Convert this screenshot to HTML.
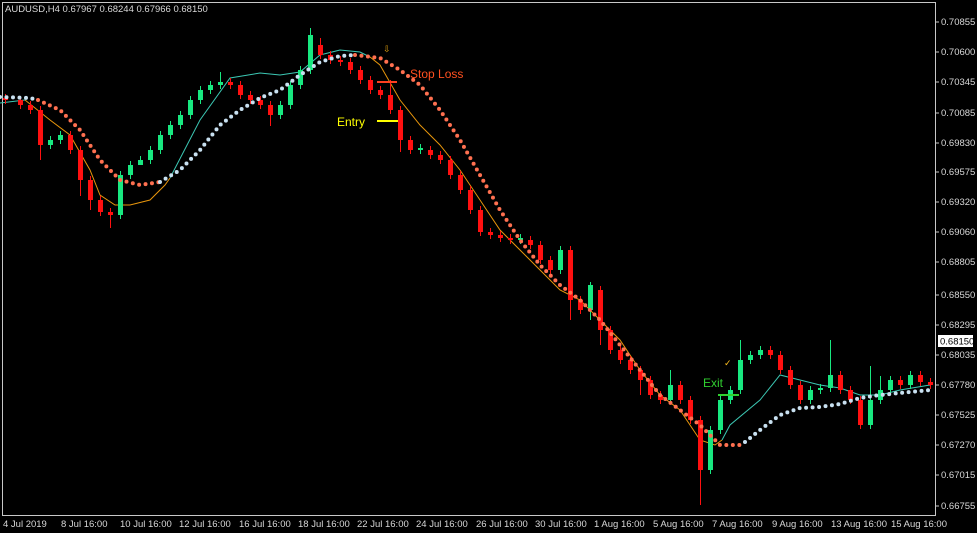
<!DOCTYPE html>
<html><head><meta charset="utf-8"><style>
html,body{margin:0;padding:0;background:#000;width:977px;height:533px;overflow:hidden}
svg{display:block}
text{font-family:"Liberation Sans",sans-serif}
</style></head><body>
<svg width="977" height="533" viewBox="0 0 977 533" xmlns="http://www.w3.org/2000/svg">
<rect x="0" y="0" width="977" height="533" fill="#000"/>
<rect x="2.5" y="2.5" width="933" height="513" fill="none" stroke="#c8c8c8" stroke-width="1"/>
<text x="5" y="12" font-size="9.5" fill="#d8d8d8">AUDUSD,H4  0.67967 0.68244 0.67966 0.68150</text>

<!-- thin MA line -->
<polyline fill="none" stroke="#3cc8b4" stroke-width="1" points="0,103 25,100"/>
<polyline fill="none" stroke="#e8960c" stroke-width="1" points="25,100 50,120 70,135 90,170 100,195 115,205 130,205 150,200 165,185 170,178"/>
<polyline fill="none" stroke="#3cc8b4" stroke-width="1" points="170,178 200,120 230,78 260,73 280,75 300,72 320,55 340,50 360,52 370,57"/>
<polyline fill="none" stroke="#e8960c" stroke-width="1" points="370,57 380,65 400,100 420,125 440,145 460,170 480,200 500,230 520,250 540,270 560,290 580,300 600,320 620,340 640,370 660,395 680,410 700,440 715,445 722,440"/>
<polyline fill="none" stroke="#3cc8b4" stroke-width="1" points="722,440 730,425 760,400 780,375 800,380 820,385 840,388 860,395 880,395 900,390 930,385"/>

<!-- wicks -->
<g stroke-width="1">
<path stroke="#ff1010" d="M5.5 94V104M20.5 96V109M30.5 101V114M40.5 106V160M70.5 131V154M80.5 146V196M90.5 176V210M100.5 196V216M110.5 208V228M230.5 78V89M240.5 81V99M250.5 91V104M260.5 96V109M270.5 101V126M320.5 38V59M330.5 51V64M340.5 56V66M350.5 58V74M360.5 66V84M370.5 76V94M380.5 86V99M390.5 80V114M400.5 106V152M410.5 136V154M430.5 146V159M440.5 151V164M450.5 156V179M460.5 171V194M470.5 186V214M480.5 206V236M490.5 228V239M500.5 231V242M510.5 234V244M530.5 236V249M540.5 241V264M550.5 256V274M570.5 246V320M580.5 296V314M600.5 286V345M610.5 326V354M620.5 346V364M630.5 356V374M640.5 366V395M650.5 376V399M660.5 391V404M680.5 381V404M690.5 396V424M700.5 416V505M770.5 346V359M780.5 351V374M790.5 366V389M800.5 381V404M840.5 371V394M850.5 386V404M860.5 396V429M900.5 376V389M920.5 371V386M930.5 378V389"/>
<path stroke="#18e880" d="M50.5 136V149M60.5 131V144M120.5 171V219M130.5 161V179M140.5 156V164M150.5 146V164M160.5 131V154M170.5 121V139M180.5 111V129M190.5 96V119M200.5 86V104M210.5 81V94M220.5 72V89M280.5 101V119M290.5 81V109M300.5 66V89M310.5 28V74M420.5 144V154M520.5 234V244M560.5 246V274M590.5 282V320M670.5 370V404M710.5 426V474M720.5 396V434M730.5 386V404M740.5 340V394M750.5 351V364M760.5 346V359M810.5 386V404M820.5 384V394M830.5 340V392M870.5 366V429M880.5 376V404M890.5 376V394M910.5 371V389"/>
</g>
<!-- bodies -->
<path fill="#ff1010" d="M3 98h5v2h-5zM18 100h5v5h-5zM28 105h5v5h-5zM38 110h5v35h-5zM68 135h5v15h-5zM78 150h5v30h-5zM88 180h5v20h-5zM98 200h5v12h-5zM108 212h5v3h-5zM228 82h5v3h-5zM238 85h5v10h-5zM248 95h5v5h-5zM258 100h5v5h-5zM268 105h5v10h-5zM318 45h5v10h-5zM328 55h5v5h-5zM338 60h5v2h-5zM348 62h5v8h-5zM358 70h5v10h-5zM368 80h5v10h-5zM378 90h5v5h-5zM388 95h5v15h-5zM398 110h5v30h-5zM408 140h5v10h-5zM428 150h5v5h-5zM438 155h5v5h-5zM448 160h5v15h-5zM458 175h5v15h-5zM468 190h5v20h-5zM478 210h5v22h-5zM488 232h5v3h-5zM498 235h5v3h-5zM508 238h5v2h-5zM528 240h5v5h-5zM538 245h5v15h-5zM548 260h5v10h-5zM568 250h5v50h-5zM578 300h5v10h-5zM598 290h5v40h-5zM608 330h5v20h-5zM618 350h5v10h-5zM628 360h5v10h-5zM638 370h5v10h-5zM648 380h5v15h-5zM658 395h5v5h-5zM678 385h5v15h-5zM688 400h5v20h-5zM698 420h5v50h-5zM768 350h5v5h-5zM778 355h5v15h-5zM788 370h5v15h-5zM798 385h5v15h-5zM838 375h5v15h-5zM848 390h5v10h-5zM858 400h5v25h-5zM898 380h5v5h-5zM918 375h5v7h-5zM928 382h5v3h-5z"/>
<path fill="#18e880" d="M48 140h5v5h-5zM58 135h5v5h-5zM118 175h5v40h-5zM128 165h5v10h-5zM138 160h5v5h-5zM148 150h5v10h-5zM158 135h5v15h-5zM168 125h5v10h-5zM178 115h5v10h-5zM188 100h5v15h-5zM198 90h5v10h-5zM208 85h5v5h-5zM218 82h5v3h-5zM278 105h5v10h-5zM288 85h5v20h-5zM298 70h5v15h-5zM308 35h5v35h-5zM418 148h5v2h-5zM518 238h5v2h-5zM558 250h5v20h-5zM588 285h5v25h-5zM668 385h5v15h-5zM708 430h5v40h-5zM718 400h5v30h-5zM728 390h5v10h-5zM738 360h5v30h-5zM748 355h5v5h-5zM758 350h5v5h-5zM808 390h5v10h-5zM818 388h5v2h-5zM828 375h5v13h-5zM868 400h5v25h-5zM878 390h5v10h-5zM888 380h5v10h-5zM908 375h5v10h-5z"/>

<!-- dotted trend line -->
<g fill="none" stroke-width="4" stroke-linecap="round" stroke-dasharray="0 6.5">
<polyline stroke="#c8e0f0" points="0,97 30,98 38,100"/>
<polyline stroke="#ff7050" points="38,100 60,110 80,130 100,160 120,180 140,185 160,182"/>
<polyline stroke="#c8e0f0" points="160,182 180,170 200,150 220,125 240,110 260,98 280,90 300,75 320,62 340,56 355,55"/>
<polyline stroke="#ff7050" points="355,55 380,58 400,70 420,85 440,110 460,140 480,175 500,210 520,240 540,265 560,285 580,300 600,320 620,345 640,370 660,395 680,410 700,425 720,445 740,445"/>
<polyline stroke="#c8e0f0" points="745,442 760,430 780,415 800,408 820,407 840,404 860,398 880,395 900,393 930,390"/>
</g>

<!-- annotations -->
<line x1="377" y1="82" x2="397" y2="82" stroke="#ff4020" stroke-width="2"/>
<text x="410" y="78" font-size="12" fill="#ff5020">Stop Loss</text>
<line x1="377" y1="121" x2="398" y2="121" stroke="#ffff00" stroke-width="2"/>
<text x="337" y="126" font-size="12" fill="#ffff00">Entry</text>
<line x1="718" y1="395" x2="739" y2="395" stroke="#30d030" stroke-width="2"/>
<text x="703" y="387" font-size="12" fill="#30d030">Exit</text>
<text x="383" y="52" font-size="9" fill="#e0a010">⇩</text>
<text x="724" y="366" font-size="9" fill="#ffc020">✓</text>

<!-- price axis -->
<g font-size="9.5" fill="#d8d8d8">
<text x="941" y="25">0.70855</text>
<text x="941" y="55">0.70600</text>
<text x="941" y="85">0.70345</text>
<text x="941" y="116">0.70085</text>
<text x="941" y="146">0.69830</text>
<text x="941" y="175">0.69575</text>
<text x="941" y="205">0.69320</text>
<text x="941" y="235">0.69060</text>
<text x="941" y="265">0.68805</text>
<text x="941" y="298">0.68550</text>
<text x="941" y="328">0.68295</text>
<text x="941" y="358">0.68035</text>
<text x="941" y="388">0.67780</text>
<text x="941" y="418">0.67525</text>
<text x="941" y="448">0.67270</text>
<text x="941" y="478">0.67015</text>
<text x="941" y="509">0.66755</text>
</g>
<g stroke="#c8c8c8"><path d="M936 22h3M936 52h3M936 82h3M936 113h3M936 143h3M936 172h3M936 202h3M936 232h3M936 262h3M936 295h3M936 325h3M936 355h3M936 385h3M936 415h3M936 445h3M936 475h3M936 506h3"/></g>
<rect x="938" y="335" width="35" height="12" fill="#fff"/>
<text x="940" y="344.5" font-size="9.5" fill="#000">0.68150</text>

<!-- time axis -->
<g font-size="9.5" fill="#d8d8d8">
<text x="3" y="527">4 Jul 2019</text>
<text x="61" y="527">8 Jul 16:00</text>
<text x="120" y="527">10 Jul 16:00</text>
<text x="179" y="527">12 Jul 16:00</text>
<text x="239" y="527">16 Jul 16:00</text>
<text x="298" y="527">18 Jul 16:00</text>
<text x="357" y="527">22 Jul 16:00</text>
<text x="416" y="527">24 Jul 16:00</text>
<text x="476" y="527">26 Jul 16:00</text>
<text x="535" y="527">30 Jul 16:00</text>
<text x="594" y="527">1 Aug 16:00</text>
<text x="653" y="527">5 Aug 16:00</text>
<text x="712" y="527">7 Aug 16:00</text>
<text x="772" y="527">9 Aug 16:00</text>
<text x="831" y="527">13 Aug 16:00</text>
<text x="891" y="527">15 Aug 16:00</text>
</g>
</svg>
</body></html>
